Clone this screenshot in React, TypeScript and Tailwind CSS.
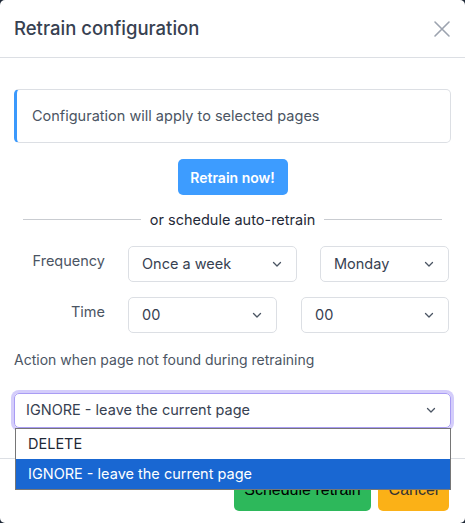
import React from "react";

const Chevron = () => (
  <svg width="12" height="12" viewBox="0 0 12 12" fill="none" className="shrink-0">
    <path d="M2.5 4.5 L6 8 L9.5 4.5" stroke="#4b5563" strokeWidth="1.3" strokeLinecap="round" strokeLinejoin="round" />
  </svg>
);

const Select = ({ value, className }: { value: string; className: string }) => (
  <div className={`flex items-center justify-between rounded-[5px] border border-[#dcdfe4] bg-white pl-[13px] pr-[13px] text-[14.5px] text-[#374151] ${className}`}>
    <span>{value}</span>
    <Chevron />
  </div>
);

export default function App() {
  return (
    <div className="h-[523px] w-[465px] bg-[#1f2937]" style={{ fontFamily: "Inter, 'Noto Sans', sans-serif" }}>
      <div className="relative h-full w-full overflow-hidden rounded-[5px] bg-white">
        <div className="flex h-[58px] items-center justify-between border-b border-[#dcdfe4] pl-[14px] pr-[14px]">
          <h1 className="text-[18.5px] font-medium text-[#374151]">Retrain configuration</h1>
          <svg width="18" height="18" viewBox="0 0 18 18" className="mt-[1px]">
            <path d="M2 2 L16 16 M16 2 L2 16" stroke="#9ca3af" strokeWidth="1.6" strokeLinecap="round" />
          </svg>
        </div>
        <div className="px-[14px] pt-[31px]">
          <div className="flex h-[54px] items-center rounded-[5px] border border-[#dcdfe4] border-l-[3px] border-l-[#3b99fc] pl-[15px] text-[14.5px] text-[#4b5563]">
            Configuration will apply to selected pages
          </div>
          <div className="mt-[16px] flex justify-center">
            <button className="h-[36px] w-[110px] rounded-[5px] bg-[#3d9cff] text-[14px] font-semibold text-white">
              Retrain now!
            </button>
          </div>
          <div className="mt-[14px] flex items-center gap-[9px] px-[9px]">
            <div className="h-px flex-1 bg-[#c9ccd1]" />
            <span className="text-[14.5px] text-[#1f2937]">or schedule auto-retrain</span>
            <div className="h-px flex-1 bg-[#c9ccd1]" />
          </div>
          <div className="mt-[15px] flex items-start">
            <div className="w-[91px] pt-[4px] text-right text-[14.5px] text-[#4b5563]">Frequency</div>
            <Select value="Once a week" className="ml-[23px] h-[36px] w-[169px]" />
            <Select value="Monday" className="ml-[23px] h-[36px] w-[129px]" />
          </div>
          <div className="mt-[15px] flex items-start">
            <div className="w-[91px] pt-[4px] text-right text-[14.5px] text-[#4b5563]">Time</div>
            <Select value="00" className="ml-[23px] h-[36px] w-[149px]" />
            <Select value="00" className="ml-[24px] h-[36px] w-[148px]" />
          </div>
          <div className="mt-[16px] text-[14px] text-[#4b5563]">Action when page not found during retraining</div>
          <div className="relative mt-[23px]">
            <div className="flex h-[35px] items-center justify-between rounded-[5px] border border-[#a99cf4] pl-[11px] pr-[13px] text-[14.5px] text-[#374151] shadow-[0_0_0_3px_#d4cdfb]">
              <span>IGNORE - leave the current page</span>
              <Chevron />
            </div>
          </div>
        </div>
        <div className="mt-[30px] border-t border-[#dcdfe4] pl-[14px] pr-[16px] pt-[11px]">
          <div className="flex justify-end gap-[7px]">
            <button className="h-[41px] w-[137px] rounded-[5px] bg-[#2db85b] text-[16px] text-black" style={{ fontFamily: "'Liberation Sans', Arial, sans-serif" }}>
              Schedule retrain
            </button>
            <button className="h-[41px] w-[71px] rounded-[5px] bg-[#fbb117] text-[16px] text-[#333]" style={{ fontFamily: "'Liberation Sans', Arial, sans-serif" }}>
              Cancel
            </button>
          </div>
        </div>
        <div className="absolute left-[15px] top-[428px] w-[436px] border border-[#767676] bg-white text-[14.5px]">
          <div className="flex h-[30px] items-center pl-[12px] text-[#1f2937]">DELETE</div>
          <div className="flex h-[30px] items-center bg-[#1967d2] pl-[12px] text-white">IGNORE - leave the current page</div>
        </div>
      </div>
    </div>
  );
}
